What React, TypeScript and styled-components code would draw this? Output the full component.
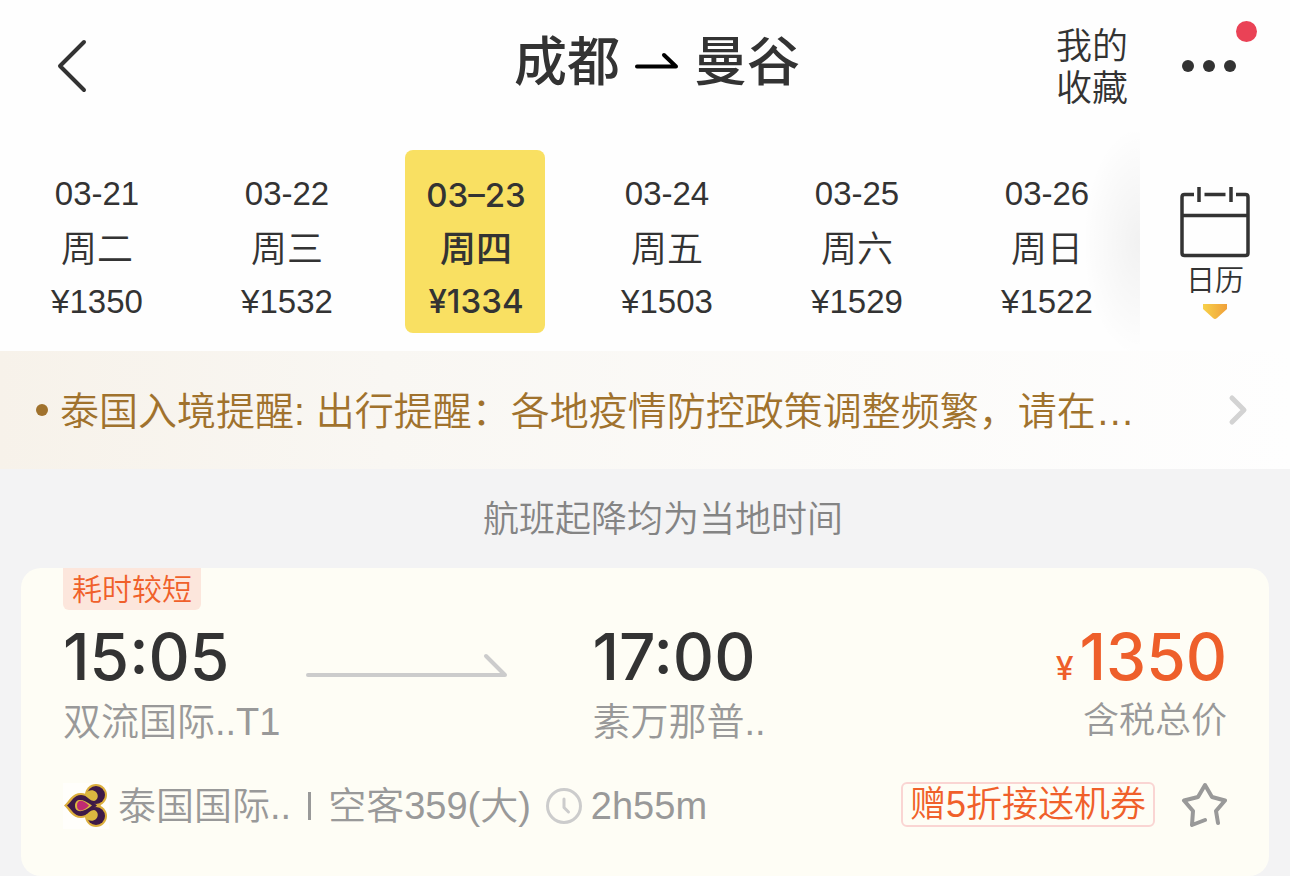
import React from "react";
import styled, { createGlobalStyle } from "styled-components";

const sans = '"Liberation Sans", "Noto Sans CJK SC", sans-serif';
const display = 'Inter, "Noto Sans CJK SC", sans-serif';

const GlobalStyle = createGlobalStyle`
  *, *::before, *::after { box-sizing: border-box; }
  body {
    margin: 0;
    background: #f3f3f4;
    color: #333;
    font-family: ${sans};
    font-weight: 350;
  }
  button {
    margin: 0;
    padding: 0;
    border: 0;
    background: none;
    color: inherit;
    font: inherit;
    cursor: pointer;
  }
  h1, p { margin: 0; }
  svg { display: block; flex: none; }
`;

const Page = styled.div`
  min-height: 100vh;
`;

const Header = styled.header`
  display: grid;
  grid-template-columns: 1fr auto 1fr;
  align-items: center;
  height: 132px;
  padding: 0 32px 0 56px;
  background: #fefefe;
`;

const BackButton = styled.button`
  justify-self: start;
`;

const Route = styled.h1`
  display: flex;
  align-items: center;
  gap: 14px;
  padding-bottom: 6px;
  font-size: 53px;
  line-height: 64px;
  font-weight: 500;
`;

const Actions = styled.div`
  display: flex;
  justify-content: flex-end;
  align-items: center;
  gap: 54px;
`;

const SavedButton = styled.button`
  width: 72px;
  padding-top: 4px;
  font-size: 36px;
  line-height: 42px;
`;

const MoreButton = styled.button`
  position: relative;
  width: 76px;
  height: 72px;
`;

const UnreadDot = styled.span`
  position: absolute;
  top: -9px;
  right: 1px;
  width: 21px;
  height: 21px;
  border-radius: 50%;
  background: #ea4256;
`;

const DateBar = styled.nav`
  display: flex;
  height: 219px;
  background: #fefefe;
`;

const DateScroller = styled.div`
  position: relative;
  flex: 1;
  display: flex;
  min-width: 0;
  padding-top: 18px;
  overflow: hidden;

  &::after {
    content: "";
    position: absolute;
    inset: 0 0 0 auto;
    width: 54px;
    background: radial-gradient(ellipse at 100% 50%, rgba(0, 0, 0, 0.05), transparent 75%);
    pointer-events: none;
  }
`;

const DaySlot = styled.div`
  flex: 1 0 190px;
  display: flex;
  justify-content: center;
`;

const Weekday = styled.span`
  font-size: 36px;
`;

const Fare = styled.span`
  line-height: 50px;
`;

const DayButton = styled.button<{ $selected?: boolean }>`
  display: flex;
  flex-direction: column;
  align-items: center;
  width: 140px;
  height: 183px;
  padding: ${(p) => (p.$selected ? "18px 0 0 2px" : "17px 0 0 4px")};
  border-radius: 8px;
  background: ${(p) => (p.$selected ? "#f9e062" : "transparent")};
  font-family: ${(p) => (p.$selected ? display : sans)};
  font-weight: ${(p) => (p.$selected ? 500 : 350)};
  font-size: 33px;
  line-height: 54px;

  ${Weekday} {
    padding-top: ${(p) => (p.$selected ? "0" : "2px")};
  }
`;

const CalendarButton = styled.button`
  display: flex;
  flex-direction: column;
  align-items: center;
  width: 150px;
  padding-top: 55px;
  font-size: 29px;
  line-height: 46px;
`;

const Notice = styled.a`
  display: flex;
  align-items: center;
  gap: 12px;
  height: 118px;
  padding: 0 41px 0 36px;
  background: linear-gradient(90deg, #f7f2ea, #f9f7f3 30%, #fefefe);
  color: #a0722d;
  font-size: 39px;
  text-decoration: none;
`;

const Bullet = styled.span`
  flex: none;
  width: 12px;
  height: 12px;
  border-radius: 50%;
  background: currentColor;
`;

const NoticeText = styled.span`
  flex: 1;
  min-width: 0;
  padding-bottom: 4px;
  overflow: hidden;
  white-space: pre;
`;

const Hint = styled.p`
  height: 99px;
  padding-left: 36px;
  color: #848484;
  font-size: 36px;
  line-height: 101px;
  text-align: center;
`;

const Card = styled.article`
  margin: 0 21px;
  padding: 0 42px;
  height: 308px;
  border-radius: 20px;
  background: #fefdf5;
`;

const Tag = styled.span`
  display: block;
  width: fit-content;
  height: 42px;
  padding: 0 9px;
  border-radius: 0 0 6px 6px;
  background: #fce6dc;
  color: #f0602a;
  font-size: 30px;
  line-height: 44px;
`;

const Trip = styled.div`
  display: flex;
  margin-top: 14px;
`;

const Stop = styled.div<{ $end?: boolean }>`
  display: flex;
  flex-direction: column;
  align-items: ${(p) => (p.$end ? "flex-end" : "flex-start")};
  margin-left: ${(p) => (p.$end ? "auto" : "0")};
  white-space: nowrap;
`;

const Time = styled.time`
  font-family: ${display};
  font-size: 64px;
  line-height: 66px;
  font-weight: 500;
`;

const Place = styled.span`
  color: #999;
  font-size: 38px;
  line-height: 64px;
`;

const FlightLine = styled.div`
  margin: 28px 84px 0 26px;
`;

const Price = styled.strong`
  display: flex;
  align-items: baseline;
  gap: 6px;
  height: 66px;
  color: #ee5f2b;
  font-family: ${display};
  font-size: 64px;
  line-height: 66px;
  font-weight: 500;
`;

const Currency = styled.span`
  font-size: 32px;
  line-height: 32px;
`;

const PriceNote = styled.span`
  color: #999;
  font-size: 36px;
  line-height: 62px;
`;

const Footer = styled.footer`
  display: flex;
  align-items: center;
  justify-content: space-between;
  margin-top: 24px;
  height: 56px;
`;

const FlightInfo = styled.div`
  display: flex;
  align-items: center;
  gap: 9px;
  color: #999;
  font-size: 38px;
  line-height: 56px;
  white-space: nowrap;
`;

const Rule = styled.span`
  width: 3px;
  height: 28px;
  margin: 0 8px;
  background: currentColor;
`;

const Duration = styled.span`
  display: flex;
  align-items: center;
  gap: 9px;
  margin-left: 6px;
`;

const Offers = styled.div`
  display: flex;
  align-items: center;
  gap: 26px;
  padding-bottom: 4px;
`;

const Coupon = styled.button`
  height: 45px;
  padding: 0 7px;
  border: 2px solid #fad5d3;
  border-radius: 6px;
  color: #f0602a;
  font-size: 36px;
  line-height: 41px;
  white-space: nowrap;
`;

const days = [
  { date: "03-21", week: "周二", price: 1350 },
  { date: "03-22", week: "周三", price: 1532 },
  { date: "03–23", week: "周四", price: 1334, selected: true },
  { date: "03-24", week: "周五", price: 1503 },
  { date: "03-25", week: "周六", price: 1529 },
  { date: "03-26", week: "周日", price: 1522 },
];

const BackIcon = () => (
  <svg width="34" height="56" viewBox="0 0 34 56" fill="none" stroke="#333" strokeWidth="4" strokeLinecap="round" strokeLinejoin="round">
    <path d="M28 4 4 28 28 52" />
  </svg>
);

const RouteArrow = () => (
  <svg width="46" height="24" viewBox="0 0 46 24" fill="none" stroke="#000" strokeWidth="4" strokeLinecap="round" strokeLinejoin="round">
    <path d="M3 15.500H42L30 4" />
  </svg>
);

const CalendarIcon = () => (
  <svg width="70" height="71" viewBox="0 0 70 71" fill="none" stroke="#333" strokeWidth="3.5">
    <path d="M14 7.5H4.5Q2 7.5 2 10V66Q2 68.5 4.5 68.5H65.5Q68 68.5 68 66V10Q68 7.5 65.5 7.5H56M24.500 7.500H45.500M2 28.500H68" />
    <path d="M19 0V15M51 0V15" />
  </svg>
);

const CalendarPointer = () => (
  <svg width="24" height="15" viewBox="0 0 24 15">
    <defs>
      <linearGradient id="pointer">
        <stop offset="0" stopColor="#f7d14a" />
        <stop offset="1" stopColor="#f0a03a" />
      </linearGradient>
    </defs>
    <path d="M0 0H24V5L14 14Q12 16 10 14L0 5Z" fill="url(#pointer)" />
  </svg>
);

const AirlineLogo = () => (
  <svg width="46" height="46" viewBox="0 0 46 46">
    <rect width="46" height="46" fill="#fffefb" />
    <g fill="#dcae3c">
      <circle cx="33" cy="12" r="11" />
      <circle cx="33" cy="33" r="11" />
      <path d="M1 22.500C6 18 9 10 18 10C25 10 30 16 38 22.500C30 29 25 35 18 35C9 35 6 27 1 22.500Z" />
    </g>
    <g fill="#3e1a47">
      <circle cx="33" cy="12" r="9" />
      <circle cx="33" cy="33" r="9" />
      <path d="M4 22.500C9 18 11 12 18 12C23 12 28 17 34 22.500C28 28 23 33 18 33C11 33 9 27 4 22.500Z" />
    </g>
    <g fill="#dcb840">
      <path d="M23 10C25 7 30 6 33 9C36 12 35 17 31 18C28 18 25 15 23 13Z" />
      <path d="M23 35C25 38 30 39 33 36C36 33 35 28 31 27C28 27 25 30 23 32Z" />
      <path d="M12 22.500C12 15 20 15 29 22.500C20 30 12 30 12 22.500Z" />
    </g>
    <path d="M14 22.500C14 16 20 16 26 22.500C20 29 14 29 14 22.500Z" fill="#c02a72" />
  </svg>
);

const ClockIcon = () => (
  <svg width="36" height="36" viewBox="0 0 36 36" fill="none" stroke="#ccc" strokeWidth="3" strokeLinecap="round" strokeLinejoin="round">
    <circle cx="18" cy="18" r="16.500" />
    <path d="M18 11V19.500L22.500 24" />
  </svg>
);

const StarIcon = () => (
  <svg width="46" height="46" viewBox="0 0 46 46" fill="none" stroke="#999" strokeWidth="4" strokeLinecap="round" strokeLinejoin="round">
    <path d="M24 39 11 44 12 30 3 19.500 17 16 24 4 31 16 44 19.500 35 30 37 42" />
  </svg>
);

export default function App() {
  return (
    <Page>
      <GlobalStyle />
      <Header>
        <BackButton aria-label="返回">
          <BackIcon />
        </BackButton>
        <Route>
          <span>成都</span>
          <RouteArrow />
          <span>曼谷</span>
        </Route>
        <Actions>
          <SavedButton>我的收藏</SavedButton>
          <MoreButton aria-label="更多">
            <svg width="56" height="72" viewBox="0 0 56 72" fill="#333">
              <circle cx="6" cy="36" r="6" />
              <circle cx="27" cy="36" r="6" />
              <circle cx="48" cy="36" r="6" />
            </svg>
            <UnreadDot />
          </MoreButton>
        </Actions>
      </Header>

      <DateBar>
        <DateScroller>
          {days.map((d) => (
            <DaySlot key={d.date}>
              <DayButton $selected={d.selected} aria-pressed={!!d.selected}>
                <span>{d.date}</span>
                <Weekday>{d.week}</Weekday>
                <Fare>¥{d.price}</Fare>
              </DayButton>
            </DaySlot>
          ))}
        </DateScroller>
        <CalendarButton>
          <CalendarIcon />
          <span>日历</span>
          <CalendarPointer />
        </CalendarButton>
      </DateBar>

      <Notice href="#notice">
        <Bullet />
        <NoticeText>泰国入境提醒: 出行提醒：各地疫情防控政策调整频繁，请在…</NoticeText>
        <svg width="22" height="32" viewBox="0 0 22 32" fill="none" stroke="#d3d3d3" strokeWidth="5" strokeLinecap="round" strokeLinejoin="round">
          <path d="M5 4 17 16 5 28" />
        </svg>
      </Notice>

      <main>
        <Hint>航班起降均为当地时间</Hint>
        <Card>
          <Tag>耗时较短</Tag>
          <Trip>
            <Stop>
              <Time>15:05</Time>
              <Place>双流国际..T1</Place>
            </Stop>
            <FlightLine>
              <svg width="202" height="26" viewBox="0 0 202 26" fill="none" stroke="#ccc" strokeWidth="4" strokeLinecap="round" strokeLinejoin="round">
                <path d="M2 23H199L180 4" />
              </svg>
            </FlightLine>
            <Stop>
              <Time>17:00</Time>
              <Place>素万那普..</Place>
            </Stop>
            <Stop $end>
              <Price>
                <Currency>¥</Currency>1350
              </Price>
              <PriceNote>含税总价</PriceNote>
            </Stop>
          </Trip>
          <Footer>
            <FlightInfo>
              <AirlineLogo />
              <span>泰国国际..</span>
              <Rule />
              <span>空客359(大)</span>
              <Duration>
                <ClockIcon />
                2h55m
              </Duration>
            </FlightInfo>
            <Offers>
              <Coupon>赠5折接送机券</Coupon>
              <button aria-label="收藏航班">
                <StarIcon />
              </button>
            </Offers>
          </Footer>
        </Card>
      </main>
    </Page>
  );
}
